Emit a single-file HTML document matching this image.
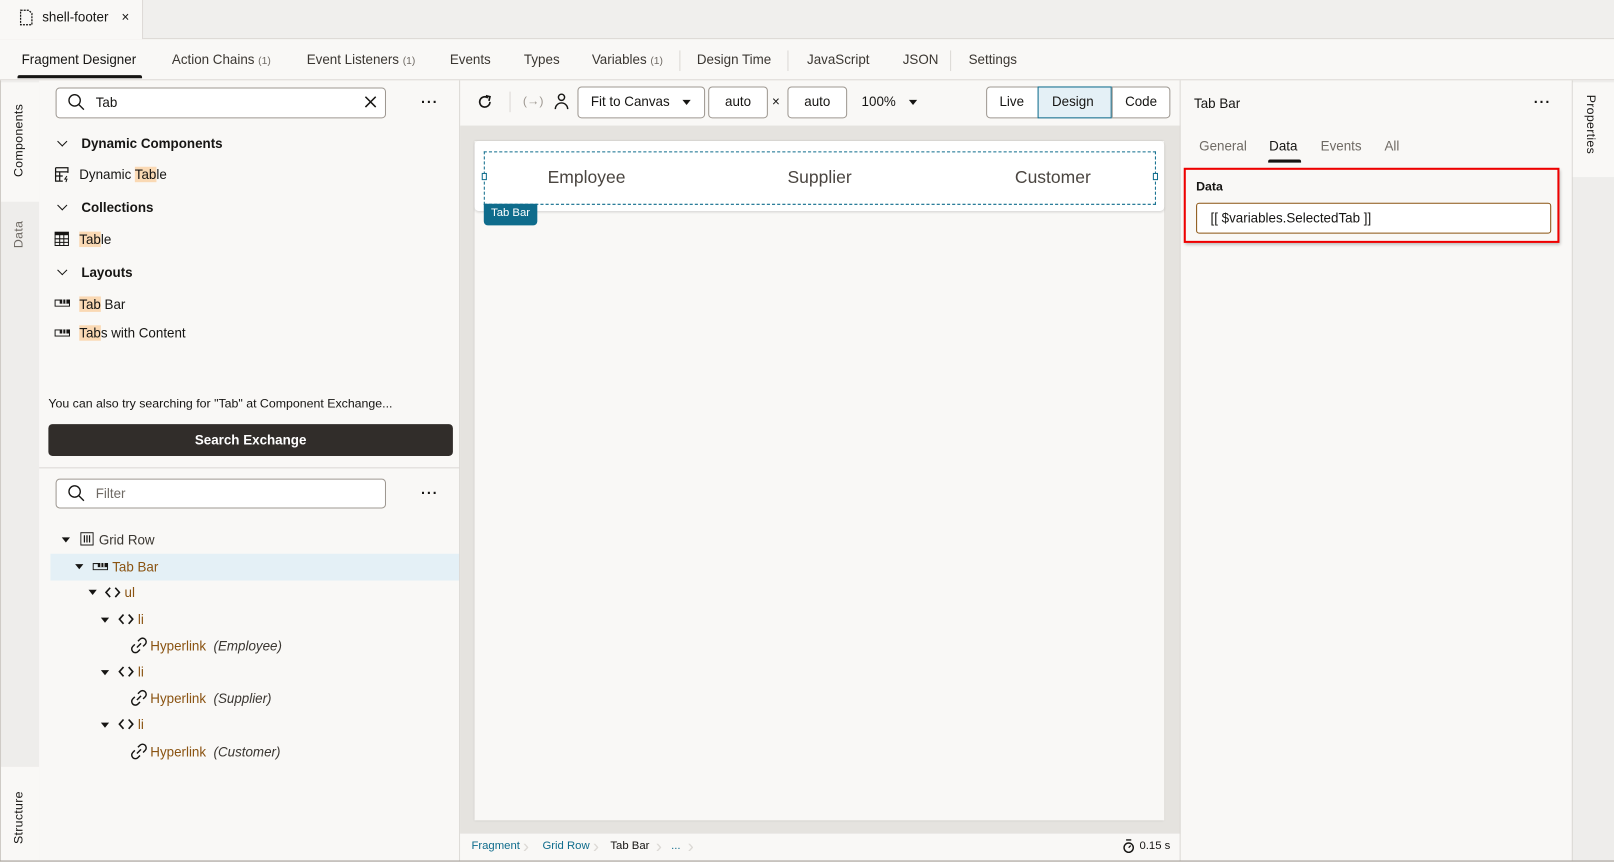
<!DOCTYPE html>
<html><head><meta charset="utf-8"><style>
*{box-sizing:border-box;margin:0;padding:0}
html,body{width:1614px;height:862px;overflow:hidden;background:#f9f8f6;font-family:"Liberation Sans",sans-serif;color:#161513}
#w{position:absolute;left:0;top:0;width:1568px;height:837px;transform:scale(1.02934);transform-origin:0 0;background:#f9f8f6}
.a{position:absolute}
.t{position:absolute;white-space:nowrap}
.nav{font-size:13px;color:#3a3631;top:50px}
.nav small{font-size:10px;color:#6f6a64}
.hl{background:#fad9b4}
.box{position:absolute;background:#fff;border:1px solid #9e9891;border-radius:4px}
.tri{position:absolute;width:0;height:0;border-left:4px solid transparent;border-right:4px solid transparent;border-top:5px solid #161513}
.chev{position:absolute;width:7px;height:7px;border-right:1.6px solid #161513;border-bottom:1.6px solid #161513;transform:rotate(45deg)}
.tb{font-size:13px}
.brown{color:#8a5311}
.vt{position:absolute;transform:rotate(-90deg);transform-origin:left top;font-size:12px;white-space:nowrap;letter-spacing:.3px}
.dots{position:absolute;font-size:14px;font-weight:bold;letter-spacing:1px}
</style></head><body><div id="w">
<div class="a" style="left:0;top:0;width:1568px;height:38px;background:#f0efed;border-bottom:1px solid #dcd9d5"></div>
<div class="a" style="left:0;top:0;width:139px;height:38px;background:#f9f8f6;border-right:1px solid #dcd9d5"></div>
<svg class="a" style="left:19px;top:9px" width="14" height="16" viewBox="0 0 14 16"><path d="M1 1h8l3 3v11H1z" fill="none" stroke="#161513" stroke-width="1.2" stroke-dasharray="2 1"/></svg>
<div class="t" style="left:41px;top:9px;font-size:13px">shell-footer</div>
<div class="t" style="left:118px;top:9px;font-size:13px">×</div>
<div class="a" style="left:0;top:77px;width:1568px;height:1px;background:#dcd9d5"></div>
<div class="t nav" style="left:21px;color:#161513">Fragment Designer</div>
<div class="a" style="left:17px;top:73px;width:121px;height:3px;background:#161513;border-radius:2px 2px 0 0"></div>
<div class="t nav" style="left:167px">Action Chains <small>(1)</small></div>
<div class="t nav" style="left:298px">Event Listeners <small>(1)</small></div>
<div class="t nav" style="left:437px">Events</div>
<div class="t nav" style="left:509px">Types</div>
<div class="t nav" style="left:575px">Variables <small>(1)</small></div>
<div class="a" style="left:660px;top:49px;width:1px;height:20px;background:#dcd9d5"></div>
<div class="t nav" style="left:677px">Design Time</div>
<div class="a" style="left:765px;top:49px;width:1px;height:20px;background:#dcd9d5"></div>
<div class="t nav" style="left:784px">JavaScript</div>
<div class="t nav" style="left:877px">JSON</div>
<div class="a" style="left:923px;top:49px;width:1px;height:20px;background:#dcd9d5"></div>
<div class="t nav" style="left:941px">Settings</div>
<div class="a" style="left:0;top:78px;width:38px;height:759px;background:#eeedeb;border-left:1px solid #cfcbc6"></div>
<div class="a" style="left:1px;top:80px;width:37px;height:116px;background:#f9f8f6"></div>
<div class="vt" style="left:11px;top:172px;color:#161513">Components</div>
<div class="vt" style="left:11px;top:241px;color:#6f6a64">Data</div>
<div class="a" style="left:1px;top:745px;width:37px;height:92px;background:#f9f8f6"></div>
<div class="vt" style="left:11px;top:820px;color:#161513">Structure</div>
<div class="box" style="left:54px;top:85px;width:321px;height:30px"></div>
<svg class="a" style="left:65px;top:90px" width="18" height="18" viewBox="0 0 18 18"><circle cx="7.5" cy="7.5" r="5.5" fill="none" stroke="#161513" stroke-width="1.3"/><path d="M11.5 11.5l5 5" stroke="#161513" stroke-width="1.3"/></svg>
<div class="t" style="left:93px;top:92px;font-size:13px">Tab</div>
<svg class="a" style="left:354px;top:93px" width="12" height="12" viewBox="0 0 12 12"><path d="M1 1l10 10M11 1L1 11" stroke="#161513" stroke-width="1.5"/></svg>
<div class="dots" style="left:409px;top:91px">···</div>
<div class="chev" style="left:57px;top:134px"></div>
<div class="t tb" style="left:79px;top:132px;font-weight:bold">Dynamic Components</div>
<svg class="a" style="left:53px;top:162px" width="15" height="15" viewBox="0 0 15 15"><path d="M1 1h12v5M1 1v13h7M1 5h12M1 9h7M5 5v9" fill="none" stroke="#161513" stroke-width="1.2"/><path d="M12 9l-2 3h2l-1 3" stroke="#161513" fill="none"/></svg>
<div class="t tb" style="left:77px;top:162px">Dynamic <span class="hl">Tab</span>le</div>
<div class="chev" style="left:57px;top:196px"></div>
<div class="t tb" style="left:79px;top:194px;font-weight:bold">Collections</div>
<svg class="a" style="left:53px;top:225px" width="14" height="14" viewBox="0 0 14 14"><rect x="0.5" y="0.5" width="13" height="13" fill="none" stroke="#161513"/><rect x="0.5" y="0.5" width="13" height="3" fill="#161513"/><path d="M0 7h14M0 10.5h14M5 3v11M9 3v11" stroke="#161513"/></svg>
<div class="t tb" style="left:77px;top:225px"><span class="hl">Tab</span>le</div>
<div class="chev" style="left:57px;top:259px"></div>
<div class="t tb" style="left:79px;top:257px;font-weight:bold">Layouts</div>
<svg class="a" style="left:53px;top:291px" width="15" height="7" viewBox="0 0 15 7"><rect x="0.5" y="0.5" width="14" height="6" fill="none" stroke="#161513"/><rect x="5" y="0" width="10" height="4" fill="#161513"/><path d="M8 0v4M11 0v4" stroke="#fff"/></svg>
<div class="t tb" style="left:77px;top:288px"><span class="hl">Tab</span> Bar</div>
<svg class="a" style="left:53px;top:320px" width="15" height="7" viewBox="0 0 15 7"><rect x="0.5" y="0.5" width="14" height="6" fill="none" stroke="#161513"/><rect x="5" y="0" width="10" height="4" fill="#161513"/><path d="M8 0v4M11 0v4" stroke="#fff"/></svg>
<div class="t tb" style="left:77px;top:316px"><span class="hl">Tab</span>s with Content</div>
<div class="t" style="left:47px;top:385px;font-size:12px">You can also try searching for "Tab" at Component Exchange...</div>
<div class="a" style="left:47px;top:412px;width:393px;height:31px;background:#312d2a;border-radius:4px;color:#fff;font-size:13px;font-weight:bold;text-align:center;line-height:31px">Search Exchange</div>
<div class="a" style="left:38px;top:454px;width:409px;height:1px;background:#dcd9d5"></div>
<div class="box" style="left:54px;top:465px;width:321px;height:29px"></div>
<svg class="a" style="left:65px;top:470px" width="18" height="18" viewBox="0 0 18 18"><circle cx="7.5" cy="7.5" r="5.5" fill="none" stroke="#161513" stroke-width="1.3"/><path d="M11.5 11.5l5 5" stroke="#161513" stroke-width="1.3"/></svg>
<div class="t" style="left:93px;top:472px;font-size:13px;color:#6f6a64">Filter</div>
<div class="dots" style="left:409px;top:471px">···</div>
<div class="a" style="left:49px;top:538px;width:398px;height:26px;background:#e4f0f6"></div>
<div class="tri" style="left:60px;top:522px"></div>
<svg class="a" style="left:78px;top:517px" width="13" height="13" viewBox="0 0 13 13"><rect x="0.5" y="0.5" width="12" height="12" fill="none" stroke="#161513"/><path d="M4 3v7M6.5 3v7M9 3v7" stroke="#161513" stroke-width="1.2"/></svg>
<div class="t tb" style="left:96px;top:517px;color:#3a3631">Grid Row</div>
<div class="tri" style="left:73px;top:548px"></div>
<svg class="a" style="left:90px;top:547px" width="15" height="7" viewBox="0 0 15 7"><rect x="0.5" y="0.5" width="14" height="6" fill="none" stroke="#161513"/><rect x="5" y="0" width="10" height="4" fill="#161513"/><path d="M8 0v4M11 0v4" stroke="#fff"/></svg>
<div class="t tb brown" style="left:109px;top:543px">Tab Bar</div>
<div class="tri" style="left:86px;top:573px"></div>
<svg class="a" style="left:102px;top:570px" width="15" height="11" viewBox="0 0 15 11"><path d="M5 1L1 5.5 5 10M10 1l4 4.5-4 4.5" fill="none" stroke="#161513" stroke-width="1.6"/></svg>
<div class="t tb brown" style="left:121px;top:568px">ul</div>
<div class="tri" style="left:98px;top:600px"></div>
<svg class="a" style="left:115px;top:596px" width="15" height="11" viewBox="0 0 15 11"><path d="M5 1L1 5.5 5 10M10 1l4 4.5-4 4.5" fill="none" stroke="#161513" stroke-width="1.6"/></svg>
<div class="t tb brown" style="left:134px;top:594px">li</div>
<svg class="a" style="left:127px;top:619px" width="16" height="16" viewBox="0 0 16 16"><path d="M6 10l4-4M7 4l2-2a3 3 0 0 1 5 5l-2 2M9 12l-2 2a3 3 0 0 1-5-5l2-2" fill="none" stroke="#161513" stroke-width="1.4"/></svg>
<div class="t tb" style="left:146px;top:620px"><span class="brown">Hyperlink</span> <i style="color:#3a3631">&nbsp;(Employee)</i></div>
<div class="tri" style="left:98px;top:651px"></div>
<svg class="a" style="left:115px;top:647px" width="15" height="11" viewBox="0 0 15 11"><path d="M5 1L1 5.5 5 10M10 1l4 4.5-4 4.5" fill="none" stroke="#161513" stroke-width="1.6"/></svg>
<div class="t tb brown" style="left:134px;top:645px">li</div>
<svg class="a" style="left:127px;top:670px" width="16" height="16" viewBox="0 0 16 16"><path d="M6 10l4-4M7 4l2-2a3 3 0 0 1 5 5l-2 2M9 12l-2 2a3 3 0 0 1-5-5l2-2" fill="none" stroke="#161513" stroke-width="1.4"/></svg>
<div class="t tb" style="left:146px;top:671px"><span class="brown">Hyperlink</span> <i style="color:#3a3631">&nbsp;(Supplier)</i></div>
<div class="tri" style="left:98px;top:702px"></div>
<svg class="a" style="left:115px;top:698px" width="15" height="11" viewBox="0 0 15 11"><path d="M5 1L1 5.5 5 10M10 1l4 4.5-4 4.5" fill="none" stroke="#161513" stroke-width="1.6"/></svg>
<div class="t tb brown" style="left:134px;top:696px">li</div>
<svg class="a" style="left:127px;top:722px" width="16" height="16" viewBox="0 0 16 16"><path d="M6 10l4-4M7 4l2-2a3 3 0 0 1 5 5l-2 2M9 12l-2 2a3 3 0 0 1-5-5l2-2" fill="none" stroke="#161513" stroke-width="1.4"/></svg>
<div class="t tb" style="left:146px;top:723px"><span class="brown">Hyperlink</span> <i style="color:#3a3631">&nbsp;(Customer)</i></div>
<div class="a" style="left:446px;top:78px;width:1px;height:759px;background:#dcd9d5"></div>
<div class="a" style="left:447px;top:122px;width:700px;height:688px;background:#e5e3df"></div>
<div class="a" style="left:461px;top:137px;width:670px;height:660px;background:#f9f8f6;box-shadow:0 0 2px rgba(0,0,0,.15)"></div>
<div class="a" style="left:461px;top:137px;width:670px;height:68px;background:#fff;border-radius:4px;box-shadow:0 1px 2px rgba(0,0,0,.12)"></div>
<div class="a" style="left:470px;top:147px;width:653px;height:52px;border:1px dashed #0f6c8c"></div>
<div class="a" style="left:468px;top:168px;width:5px;height:7px;border:1px solid #0f6c8c;background:#fff"></div>
<div class="a" style="left:1120px;top:168px;width:5px;height:7px;border:1px solid #0f6c8c;background:#fff"></div>
<div class="t" style="left:532px;top:163px;font-size:17px;color:#4a4540">Employee</div>
<div class="t" style="left:765px;top:163px;font-size:17px;color:#4a4540">Supplier</div>
<div class="t" style="left:986px;top:163px;font-size:17px;color:#4a4540">Customer</div>
<div class="a" style="left:470px;top:198px;width:52px;height:21px;background:#0f6c8c;border-radius:0 0 4px 4px;color:#fff;font-size:11px;text-align:center;line-height:19px">Tab Bar</div>
<svg class="a" style="left:463px;top:91px" width="16" height="16" viewBox="0 0 16 16"><path d="M13 8a5 5 0 1 1-2-4" fill="none" stroke="#161513" stroke-width="1.6"/><path d="M9 2l4 1-1 4" fill="none" stroke="#161513" stroke-width="1.6"/></svg>
<div class="a" style="left:495px;top:89px;width:1px;height:20px;background:#dcd9d5"></div>
<div class="t" style="left:508px;top:91px;font-size:12px;color:#9e9891">(→)</div>
<svg class="a" style="left:538px;top:90px" width="15" height="17" viewBox="0 0 15 17"><circle cx="7.5" cy="4.5" r="3" fill="none" stroke="#161513" stroke-width="1.4"/><path d="M1.5 16a6 6 0 0 1 12 0" fill="none" stroke="#161513" stroke-width="1.4"/></svg>
<div class="box" style="left:561px;top:84px;width:124px;height:31px"></div>
<div class="t" style="left:574px;top:91px;font-size:13px">Fit to Canvas</div>
<div class="tri" style="left:663px;top:97px"></div>
<div class="box" style="left:688px;top:84px;width:58px;height:31px;text-align:center;line-height:28px;font-size:13px">auto</div>
<div class="t" style="left:750px;top:91px;font-size:13px">×</div>
<div class="box" style="left:765px;top:84px;width:58px;height:31px;text-align:center;line-height:28px;font-size:13px">auto</div>
<div class="t" style="left:837px;top:91px;font-size:13px">100%</div>
<div class="tri" style="left:883px;top:97px"></div>
<div class="box" style="left:958px;top:84px;width:179px;height:31px;overflow:hidden"></div>
<div class="a" style="left:1008px;top:84px;width:72px;height:31px;background:#e4f0f6;border:1px solid #0f6c8c"></div>
<div class="a" style="left:1080px;top:85px;width:1px;height:29px;background:#9e9891"></div>
<div class="t" style="left:971px;top:91px;font-size:13px">Live</div>
<div class="t" style="left:1022px;top:91px;font-size:13px">Design</div>
<div class="t" style="left:1093px;top:91px;font-size:13px">Code</div>
<div class="a" style="left:447px;top:810px;width:700px;height:27px;background:#f9f8f6"></div>
<div class="t" style="left:458px;top:816px;font-size:11px;color:#0f6c8c">Fragment</div>
<div class="t" style="left:508px;top:812px;font-size:18px;color:#dcd9d5">›</div>
<div class="t" style="left:527px;top:816px;font-size:11px;color:#0f6c8c">Grid Row</div>
<div class="t" style="left:576px;top:812px;font-size:18px;color:#dcd9d5">›</div>
<div class="t" style="left:593px;top:816px;font-size:11px">Tab Bar</div>
<div class="t" style="left:637px;top:812px;font-size:18px;color:#dcd9d5">›</div>
<div class="t" style="left:652px;top:816px;font-size:11px;color:#0f6c8c">...</div>
<div class="t" style="left:668px;top:812px;font-size:18px;color:#dcd9d5">›</div>
<svg class="a" style="left:1090px;top:815px" width="13" height="14" viewBox="0 0 13 14"><path d="M4 1h5" stroke="#161513" stroke-width="1.4"/><circle cx="6.5" cy="8.5" r="4.5" fill="none" stroke="#161513" stroke-width="1.4"/><path d="M6.5 8.5l2-2" stroke="#161513" stroke-width="1.2"/></svg>
<div class="t" style="left:1107px;top:816px;font-size:11px">0.15 s</div>
<div class="a" style="left:1146px;top:78px;width:1px;height:759px;background:#dcd9d5"></div>
<div class="t" style="left:1160px;top:93px;font-size:13px">Tab Bar</div>
<div class="dots" style="left:1490px;top:91px">···</div>
<div class="t" style="left:1165px;top:134px;font-size:13px;color:#6f6a64">General</div>
<div class="t" style="left:1233px;top:134px;font-size:13px">Data</div>
<div class="a" style="left:1232px;top:155px;width:32px;height:3px;background:#161513;border-radius:2px 2px 0 0"></div>
<div class="t" style="left:1283px;top:134px;font-size:13px;color:#6f6a64">Events</div>
<div class="t" style="left:1345px;top:134px;font-size:13px;color:#6f6a64">All</div>
<div class="a" style="left:1150px;top:163px;width:365px;height:73px;border:2px solid #e00;box-shadow:1px 2px 3px rgba(0,0,0,.25)"></div>
<div class="t" style="left:1162px;top:174px;font-size:12px;font-weight:bold">Data</div>
<div class="a" style="left:1162px;top:197px;width:345px;height:30px;background:#fff;border:1px solid #8a5311;border-radius:3px"></div>
<div class="t" style="left:1176px;top:204px;font-size:13px">[[ $variables.SelectedTab ]]</div>
<div class="a" style="left:1527px;top:78px;width:41px;height:759px;background:#eeedeb;border-left:1px solid #dcd9d5"></div>
<div class="a" style="left:1528px;top:80px;width:40px;height:92px;background:#f9f8f6"></div>
<div class="t" style="left:1553px;top:92px;font-size:12px;transform:rotate(90deg);transform-origin:left top;letter-spacing:.3px">Properties</div>
<div class="a" style="left:0;top:836px;width:1568px;height:1px;background:#9e9891"></div>
</div></body></html>
